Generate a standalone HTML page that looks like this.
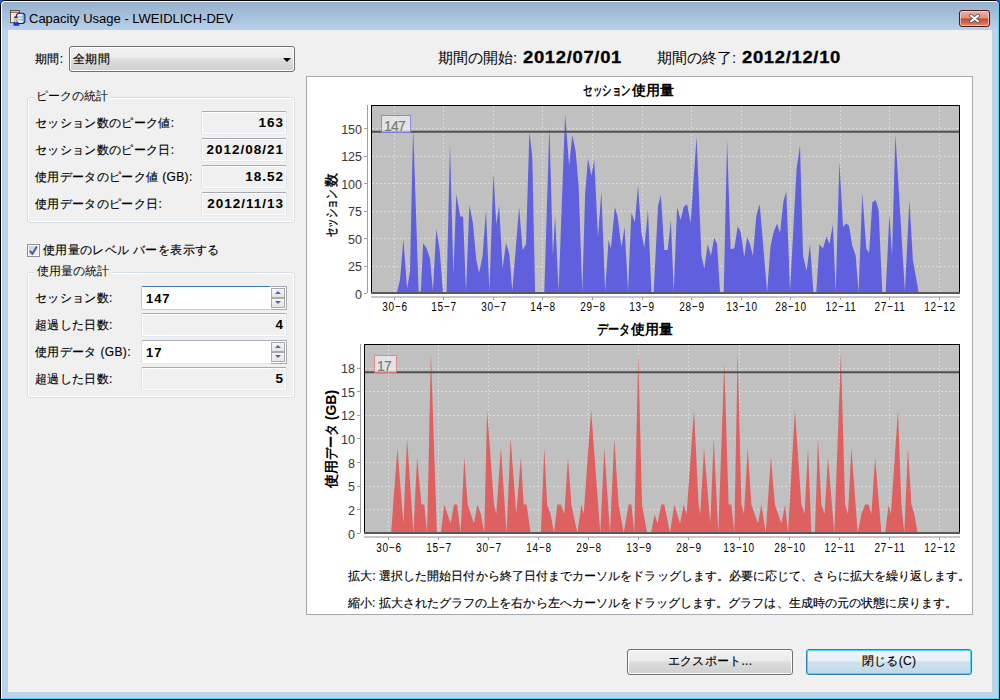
<!DOCTYPE html>
<html lang="ja"><head><meta charset="utf-8"><title>Capacity Usage</title>
<style>
*{margin:0;padding:0;box-sizing:border-box}
html,body{width:1000px;height:700px;overflow:hidden;background:#1d5fc0}
body{position:relative;font-family:"Liberation Sans",sans-serif;font-size:12px;color:#000}
.a{position:absolute;white-space:nowrap}
#win{position:absolute;left:0;top:0;width:1000px;height:700px;border-radius:5px 5px 0 0;overflow:hidden;background:#bcd3ea;border:1px solid #000}
#tb{position:absolute;left:0;top:0;width:998px;height:29px;background:linear-gradient(#95aecb,#b9d1ea)}
#hl{position:absolute;left:0;top:0;width:998px;height:698px;border-top:1px solid #fff;border-left:1px solid #fff;border-right:1px solid #3fdcf4;border-bottom:1px solid #3fdcf4;border-radius:4px 4px 0 0}
#client{position:absolute;left:8px;top:30px;width:984px;height:662px;background:#f0f0f0}
.lbl{position:absolute;white-space:nowrap;font-size:12px;line-height:14px;letter-spacing:0.35px;-webkit-text-stroke:0.15px #000}
.grp{position:absolute;border:1px solid #d5dfe5;border-radius:3px;box-shadow:inset 0 0 0 1px #fff}
.leg{position:absolute;background:#f0f0f0;padding:0 2px;font-size:12px;line-height:14px;white-space:nowrap}
.fld{position:absolute;border:1px solid #dde2e8;border-top-color:#a8abb2;border-bottom-color:#e3e9ef;border-radius:2px;background:#f0f0f0;box-shadow:inset 0 0 0 1px #fdfdfd}
.val{position:absolute;right:2px;top:4px;font-weight:bold;font-size:13.5px;line-height:14px;letter-spacing:1px}
.nk{display:inline-block;white-space:nowrap;overflow:visible}
.nk>span{display:inline-block;transform-origin:0 50%}
.spin{position:absolute;border:1px solid #dbdfe6;border-top-color:#abadb3;border-bottom-color:#e3e9ef;border-radius:2px;background:#fff}
.sb{position:absolute;right:0;width:16px;height:11px;border:1px solid #b0b0b0;background:linear-gradient(#f4f4f4,#e0e0e0)}
.sb i{position:absolute;left:4px;width:0;height:0;border-left:3.5px solid transparent;border-right:3.5px solid transparent}
.ytl{position:absolute;text-align:right;font-size:12.5px;line-height:14px;color:#383838}
.xtl{position:absolute;text-align:center;font-family:"Liberation Sans",sans-serif;font-size:12.5px;line-height:14px;color:#000;letter-spacing:0.9px;transform:scaleX(0.8)}
.btn{position:absolute;border:1px solid #707070;border-radius:3px;background:linear-gradient(#f2f2f2 0%,#ebebeb 45%,#dddddd 50%,#cfcfcf 100%);box-shadow:inset 0 0 0 1px #fcfcfc;text-align:center;font-size:12px;line-height:23px;letter-spacing:0.3px;-webkit-text-stroke:0.15px #000}
</style></head><body>
<div id="win">
 <div id="tb"></div>
 <div id="hl"></div>
</div>
<!-- title icon -->
<svg class="a" style="left:8px;top:8px" width="20" height="20" viewBox="0 0 20 20">
 <defs><linearGradient id="dbg" x1="0" y1="0" x2="1" y2="0"><stop offset="0" stop-color="#ffffff"/><stop offset="0.6" stop-color="#d8e8ec"/><stop offset="1" stop-color="#5a9aa0"/></linearGradient></defs>
 <rect x="2.5" y="2.5" width="9" height="12.2" fill="#dfe0c4" stroke="#56564c" stroke-width="1"/>
 <rect x="3" y="3" width="8" height="1.1" fill="#ecc848"/>
 <rect x="3" y="4.1" width="8" height="0.7" fill="#9a3050"/>
 <g fill="#ffffff"><rect x="3.3" y="5.3" width="1.2" height="1.2"/><rect x="5.3" y="5.3" width="1.2" height="1.2"/><rect x="7.3" y="5.3" width="1.2" height="1.2"/><rect x="3.3" y="7.3" width="1.2" height="1.2"/><rect x="5.3" y="7.3" width="1.2" height="1.2"/><rect x="3.3" y="9.3" width="1.2" height="1.2"/><rect x="3.3" y="11.3" width="1.2" height="1.2"/><rect x="3.3" y="13" width="1.2" height="1"/></g>
 <path d="M10.6 5.3 L15.2 5.3 L16.9 6.8 L16.9 14 L15.2 15.5 L10.6 15.5 L8.6 14 L8.6 6.8 Z" fill="url(#dbg)" stroke="#121a8c" stroke-width="1.1"/>
 <path d="M9.2 9 H16.4 M9.2 11.8 H16.4" stroke="#6aa0b0" stroke-width="0.8"/>
 <path d="M5.6 17.8 Q4.8 13.2 7.8 12.9 Q10.8 13.2 11.6 17.8 Z" fill="#2232d0"/>
 <rect x="7.2" y="13" width="1.4" height="1.3" fill="#e8f0ff"/>
 <ellipse cx="7.9" cy="11" rx="1.8" ry="2" fill="#f0b078"/>
 <path d="M6 10 Q6.2 7.9 7.9 7.9 Q9.7 7.9 9.9 10 Z" fill="#2a3aa8"/>
</svg>
<div class="a" style="left:29px;top:11px;font-size:13px;line-height:16px;color:#000">Capacity Usage - LWEIDLICH-DEV</div>
<!-- close button -->
<div class="a" style="left:959px;top:10px;width:31px;height:17px;border:1px solid #4a1a22;border-radius:3px;background:linear-gradient(#ebb0a0 0%,#e0907c 48%,#c04a30 52%,#d86a50 80%,#e89070 100%);box-shadow:inset 0 0 0 1px rgba(255,220,210,0.7)"></div>
<svg class="a" style="left:968px;top:13px" width="14" height="11" viewBox="0 0 14 11">
 <path d="M3 2.6 L10 8.4 M10 2.6 L3 8.4" stroke="#3a3a4a" stroke-width="3.6" stroke-linecap="round"/>
 <path d="M3 2.6 L10 8.4 M10 2.6 L3 8.4" stroke="#ffffff" stroke-width="2.2" stroke-linecap="round"/>
</svg>
<div id="client"></div>

<!-- left panel -->
<div class="lbl" style="left:35px;top:52px">期間:</div>
<div class="a" style="left:69px;top:46px;width:226px;height:26px;border:1px solid #707070;border-radius:3px;background:linear-gradient(#f2f2f2 0%,#ebebeb 45%,#dddddd 50%,#cfcfcf 100%);box-shadow:inset 0 0 0 1px #fcfcfc"></div>
<div class="lbl" style="left:73px;top:52px">全期間</div>
<div class="a" style="left:283px;top:58px;width:0;height:0;border-left:4px solid transparent;border-right:4px solid transparent;border-top:4px solid #000"></div>

<div class="grp" style="left:27px;top:97px;width:268px;height:126px"></div>
<div class="leg" style="left:34px;top:89px">ピークの統計</div>
<div class="lbl" style="left:35px;top:116px">セッション数のピーク値:</div>
<div class="lbl" style="left:35px;top:143px">セッション数のピーク日:</div>
<div class="lbl" style="left:35px;top:170px">使用データのピーク値 (GB):</div>
<div class="lbl" style="left:35px;top:197px">使用データのピーク日:</div>
<div class="fld" style="left:201px;top:111px;width:86px;height:24px"><div class="val">163</div></div>
<div class="fld" style="left:201px;top:138px;width:86px;height:24px"><div class="val">2012/08/21</div></div>
<div class="fld" style="left:201px;top:165px;width:86px;height:24px"><div class="val">18.52</div></div>
<div class="fld" style="left:201px;top:192px;width:86px;height:24px"><div class="val">2012/11/13</div></div>

<div class="a" style="left:27px;top:244px;width:13px;height:13px;border:1px solid #8f8f8f;background:#fff"></div>
<div class="a" style="left:29px;top:246px;width:9px;height:9px;background:linear-gradient(135deg,#c8ccd4,#eef0f2)"></div>
<svg class="a" style="left:28px;top:245px" width="11" height="11" viewBox="0 0 11 11"><path d="M2 5.8 L4.4 8.8 L8.8 1.6" stroke="#4a5a9c" stroke-width="1.9" fill="none"/></svg>
<div class="lbl" style="left:43px;top:243px">使用量のレベル バーを表示する</div>

<div class="grp" style="left:27px;top:272px;width:268px;height:126px"></div>
<div class="leg" style="left:35px;top:264px">使用量の統計</div>
<div class="lbl" style="left:35px;top:291px">セッション数:</div>
<div class="lbl" style="left:35px;top:318px">超過した日数:</div>
<div class="lbl" style="left:35px;top:345px">使用データ (GB):</div>
<div class="lbl" style="left:35px;top:372px">超過した日数:</div>
<div class="spin" style="left:141px;top:286px;width:146px;height:24px;border-color:#3d7bad #b5cfe7 #b5cfe7 #b5cfe7;">
 <div class="a" style="left:4px;top:5px;font-weight:bold;font-size:13px;line-height:13px;letter-spacing:0.9px">147</div>
</div>
<div class="a" style="left:270px;top:286px;width:17px;height:24px;border:1px solid #a9a9b0;border-left-color:#fff;background:#fff"></div>
<div class="a" style="left:271px;top:288px;width:14px;height:10px;border:1px solid #a9a9b0;background:linear-gradient(#f6f6f6,#e4e4e4)"></div>
<div class="a" style="left:271px;top:298px;width:14px;height:10px;border:1px solid #a9a9b0;background:linear-gradient(#f6f6f6,#e4e4e4)"></div>
<div class="a" style="left:275px;top:291px;width:0;height:0;border-left:3px solid transparent;border-right:3px solid transparent;border-bottom:3px solid #4a5fc0"></div>
<div class="a" style="left:275px;top:301px;width:0;height:0;border-left:3px solid transparent;border-right:3px solid transparent;border-top:3px solid #4a5fc0"></div>
<div class="fld" style="left:141px;top:313px;width:146px;height:24px"><div class="val">4</div></div>
<div class="spin" style="left:141px;top:340px;width:146px;height:24px;">
 <div class="a" style="left:4px;top:5px;font-weight:bold;font-size:13px;line-height:13px;letter-spacing:0.9px">17</div>
</div>
<div class="a" style="left:270px;top:340px;width:17px;height:24px;border:1px solid #a9a9b0;border-left-color:#fff;background:#fff"></div>
<div class="a" style="left:271px;top:342px;width:14px;height:10px;border:1px solid #a9a9b0;background:linear-gradient(#f6f6f6,#e4e4e4)"></div>
<div class="a" style="left:271px;top:352px;width:14px;height:10px;border:1px solid #a9a9b0;background:linear-gradient(#f6f6f6,#e4e4e4)"></div>
<div class="a" style="left:275px;top:345px;width:0;height:0;border-left:3px solid transparent;border-right:3px solid transparent;border-bottom:3px solid #4a5fc0"></div>
<div class="a" style="left:275px;top:355px;width:0;height:0;border-left:3px solid transparent;border-right:3px solid transparent;border-top:3px solid #4a5fc0"></div>
<div class="fld" style="left:141px;top:367px;width:146px;height:24px"><div class="val">5</div></div>

<!-- right header -->
<div class="a" style="left:438px;top:49px;font-size:15px;line-height:18px">期間の開始: <b style="display:inline-block;margin-left:2px;transform:scaleX(1.15);transform-origin:0 50%;font-size:16px;letter-spacing:0.6px;-webkit-text-stroke:0.3px #000">2012/07/01</b></div>
<div class="a" style="left:657px;top:49px;font-size:15px;line-height:18px">期間の終了: <b style="display:inline-block;margin-left:2px;transform:scaleX(1.15);transform-origin:0 50%;font-size:16px;letter-spacing:0.6px;-webkit-text-stroke:0.3px #000">2012/12/10</b></div>

<!-- chart panel -->
<div class="a" style="left:306px;top:76px;width:667px;height:539px;background:#fff;border:1px solid #a8a8b0"></div>
<div class="a" style="left:583px;top:82px;font-weight:bold;font-size:14px;line-height:16px"><span class="nk" style="width:49px"><span style="transform:scaleX(0.68)">セッション</span></span>使用量</div>
<div class="a" style="left:597px;top:321px;font-weight:bold;font-size:14px;line-height:16px"><span class="nk" style="width:34px"><span style="transform:scaleX(0.8)">データ</span></span>使用量</div>
<div class="a" style="left:331px;top:204.5px;transform:translate(-50%,-50%) rotate(-90deg);font-size:14px;line-height:14px;-webkit-text-stroke:0.4px #000"><span class="nk" style="width:50px"><span style="transform:scaleX(0.67)">セッション</span></span>数</div>
<div class="a" style="left:331px;top:439px;transform:translate(-50%,-50%) rotate(-90deg);font-weight:bold;font-size:14px;line-height:16px">使用<span class="nk" style="width:36px"><span style="transform:scaleX(0.86)">データ</span></span> (GB)</div>
<svg class="a" style="left:0;top:0" width="1000" height="700" viewBox="0 0 1000 700">
<rect x="371" y="105" width="588" height="187.5" fill="#c0c0c0"/>
<line x1="372" y1="266.5" x2="959" y2="266.5" stroke="#dadada" stroke-width="1" stroke-dasharray="2,2"/>
<line x1="372" y1="238.5" x2="959" y2="238.5" stroke="#dadada" stroke-width="1" stroke-dasharray="2,2"/>
<line x1="372" y1="211.5" x2="959" y2="211.5" stroke="#dadada" stroke-width="1" stroke-dasharray="2,2"/>
<line x1="372" y1="183.5" x2="959" y2="183.5" stroke="#dadada" stroke-width="1" stroke-dasharray="2,2"/>
<line x1="372" y1="156.5" x2="959" y2="156.5" stroke="#dadada" stroke-width="1" stroke-dasharray="2,2"/>
<line x1="372" y1="128.5" x2="959" y2="128.5" stroke="#dadada" stroke-width="1" stroke-dasharray="2,2"/>
<line x1="394.5" y1="106" x2="394.5" y2="292.5" stroke="#dadada" stroke-width="1" stroke-dasharray="2,2"/>
<line x1="443.5" y1="106" x2="443.5" y2="292.5" stroke="#dadada" stroke-width="1" stroke-dasharray="2,2"/>
<line x1="493.5" y1="106" x2="493.5" y2="292.5" stroke="#dadada" stroke-width="1" stroke-dasharray="2,2"/>
<line x1="542.5" y1="106" x2="542.5" y2="292.5" stroke="#dadada" stroke-width="1" stroke-dasharray="2,2"/>
<line x1="592.5" y1="106" x2="592.5" y2="292.5" stroke="#dadada" stroke-width="1" stroke-dasharray="2,2"/>
<line x1="642.5" y1="106" x2="642.5" y2="292.5" stroke="#dadada" stroke-width="1" stroke-dasharray="2,2"/>
<line x1="691.5" y1="106" x2="691.5" y2="292.5" stroke="#dadada" stroke-width="1" stroke-dasharray="2,2"/>
<line x1="741.5" y1="106" x2="741.5" y2="292.5" stroke="#dadada" stroke-width="1" stroke-dasharray="2,2"/>
<line x1="790.5" y1="106" x2="790.5" y2="292.5" stroke="#dadada" stroke-width="1" stroke-dasharray="2,2"/>
<line x1="840.5" y1="106" x2="840.5" y2="292.5" stroke="#dadada" stroke-width="1" stroke-dasharray="2,2"/>
<line x1="889.5" y1="106" x2="889.5" y2="292.5" stroke="#dadada" stroke-width="1" stroke-dasharray="2,2"/>
<line x1="939.5" y1="106" x2="939.5" y2="292.5" stroke="#dadada" stroke-width="1" stroke-dasharray="2,2"/>
<polygon points="397.1,292.5 397.1,292.0 400.0,280.0 403.4,239.1 407.1,288.6 410.0,271.4 413.1,127.1 418.6,291.4 420.9,291.4 423.1,242.9 426.6,248.6 430.0,258.6 432.9,290.9 436.3,229.1 439.7,250.0 442.9,292.0 446.6,292.0 450.0,144.3 453.4,274.3 456.3,194.3 460.3,216.6 463.1,216.6 466.0,292.0 469.4,205.1 472.9,222.9 476.3,260.0 479.1,272.9 482.6,255.7 486.0,210.0 489.4,292.0 493.4,172.9 496.3,224.3 499.1,205.7 502.6,268.6 506.0,242.9 509.4,254.3 512.3,290.9 519.1,207.1 522.6,250.0 526.0,244.3 529.4,131.4 532.3,157.1 535.1,292.0 544.3,292.0 549.4,125.7 552.9,255.7 555.1,215.7 558.6,291.4 565.1,114.3 569.1,165.7 572.3,134.9 575.7,151.4 578.6,185.7 582.3,292.0 585.1,194.3 588.0,158.6 591.4,175.7 594.3,160.0 598.0,237.1 601.4,191.4 605.1,290.9 608.6,240.0 610.9,248.6 614.9,207.1 617.7,217.1 621.4,247.1 624.6,227.1 628.0,290.9 631.4,212.9 634.9,222.3 638.0,185.7 641.4,232.9 644.3,248.0 648.0,210.0 651.4,292.0 653.7,292.0 658.0,205.7 660.9,195.1 664.3,250.0 667.7,250.0 670.9,220.0 673.7,292.0 677.1,207.1 680.6,220.0 683.7,207.1 687.1,204.3 690.6,222.9 696.6,137.1 701.4,255.7 704.3,268.6 707.7,244.3 710.9,255.7 714.3,237.7 717.1,244.3 720.0,292.0 723.7,292.0 727.1,140.0 730.6,249.1 734.3,248.6 737.7,226.6 740.6,231.4 744.3,257.1 747.1,237.1 750.0,244.3 752.9,255.7 756.3,215.7 759.7,204.3 767.1,292.0 770.6,245.7 773.4,232.9 777.1,223.4 780.0,232.9 783.4,201.4 786.3,191.4 790.0,290.9 796.6,168.6 800.0,145.7 803.1,255.7 806.6,270.9 810.0,244.3 813.4,292.0 816.3,292.0 819.4,244.3 822.9,248.6 826.6,236.6 829.4,244.3 832.9,224.3 835.7,292.0 839.4,161.4 843.1,227.1 846.0,223.4 849.1,225.7 852.3,245.7 855.7,255.7 858.6,292.0 862.3,192.9 866.3,248.6 869.1,252.9 872.3,202.3 875.7,200.0 878.6,210.0 882.3,292.0 885.7,292.0 889.4,214.3 892.0,255.7 895.4,134.3 904.9,290.9 909.4,200.0 912.9,260.0 918.6,292.0 918.6,292.5" fill="#6060de"/>
<line x1="371" y1="131.8" x2="959" y2="131.8" stroke="#505050" stroke-width="2"/>
<rect x="371" y="105" width="589" height="1" fill="#000"/>
<rect x="371" y="105" width="1" height="187" fill="#000"/>
<rect x="959" y="105" width="1" height="187" fill="#000"/>
<rect x="371" y="292" width="589" height="2" fill="#5a5a5a"/>
<rect x="367" y="105" width="1" height="188" fill="#a0a0a0"/>
<rect x="364" y="293" width="3" height="1" fill="#a0a0a0"/>
<rect x="364" y="266" width="3" height="1" fill="#a0a0a0"/>
<rect x="364" y="238" width="3" height="1" fill="#a0a0a0"/>
<rect x="364" y="211" width="3" height="1" fill="#a0a0a0"/>
<rect x="364" y="183" width="3" height="1" fill="#a0a0a0"/>
<rect x="364" y="156" width="3" height="1" fill="#a0a0a0"/>
<rect x="364" y="128" width="3" height="1" fill="#a0a0a0"/>
<rect x="371" y="296" width="589" height="2" fill="#c8c8c8"/>
<rect x="394" y="297" width="1" height="3" fill="#a0a0a0"/>
<rect x="443" y="297" width="1" height="3" fill="#a0a0a0"/>
<rect x="493" y="297" width="1" height="3" fill="#a0a0a0"/>
<rect x="542" y="297" width="1" height="3" fill="#a0a0a0"/>
<rect x="592" y="297" width="1" height="3" fill="#a0a0a0"/>
<rect x="642" y="297" width="1" height="3" fill="#a0a0a0"/>
<rect x="691" y="297" width="1" height="3" fill="#a0a0a0"/>
<rect x="741" y="297" width="1" height="3" fill="#a0a0a0"/>
<rect x="790" y="297" width="1" height="3" fill="#a0a0a0"/>
<rect x="840" y="297" width="1" height="3" fill="#a0a0a0"/>
<rect x="889" y="297" width="1" height="3" fill="#a0a0a0"/>
<rect x="939" y="297" width="1" height="3" fill="#a0a0a0"/>
<rect x="364" y="344" width="595" height="188.5" fill="#c0c0c0"/>
<line x1="365" y1="509.5" x2="959" y2="509.5" stroke="#dadada" stroke-width="1" stroke-dasharray="2,2"/>
<line x1="365" y1="486.5" x2="959" y2="486.5" stroke="#dadada" stroke-width="1" stroke-dasharray="2,2"/>
<line x1="365" y1="462.5" x2="959" y2="462.5" stroke="#dadada" stroke-width="1" stroke-dasharray="2,2"/>
<line x1="365" y1="438.5" x2="959" y2="438.5" stroke="#dadada" stroke-width="1" stroke-dasharray="2,2"/>
<line x1="365" y1="415.5" x2="959" y2="415.5" stroke="#dadada" stroke-width="1" stroke-dasharray="2,2"/>
<line x1="365" y1="391.5" x2="959" y2="391.5" stroke="#dadada" stroke-width="1" stroke-dasharray="2,2"/>
<line x1="365" y1="368.5" x2="959" y2="368.5" stroke="#dadada" stroke-width="1" stroke-dasharray="2,2"/>
<line x1="388.5" y1="345" x2="388.5" y2="532.5" stroke="#dadada" stroke-width="1" stroke-dasharray="2,2"/>
<line x1="438.5" y1="345" x2="438.5" y2="532.5" stroke="#dadada" stroke-width="1" stroke-dasharray="2,2"/>
<line x1="488.5" y1="345" x2="488.5" y2="532.5" stroke="#dadada" stroke-width="1" stroke-dasharray="2,2"/>
<line x1="538.5" y1="345" x2="538.5" y2="532.5" stroke="#dadada" stroke-width="1" stroke-dasharray="2,2"/>
<line x1="588.5" y1="345" x2="588.5" y2="532.5" stroke="#dadada" stroke-width="1" stroke-dasharray="2,2"/>
<line x1="638.5" y1="345" x2="638.5" y2="532.5" stroke="#dadada" stroke-width="1" stroke-dasharray="2,2"/>
<line x1="688.5" y1="345" x2="688.5" y2="532.5" stroke="#dadada" stroke-width="1" stroke-dasharray="2,2"/>
<line x1="739.5" y1="345" x2="739.5" y2="532.5" stroke="#dadada" stroke-width="1" stroke-dasharray="2,2"/>
<line x1="789.5" y1="345" x2="789.5" y2="532.5" stroke="#dadada" stroke-width="1" stroke-dasharray="2,2"/>
<line x1="839.5" y1="345" x2="839.5" y2="532.5" stroke="#dadada" stroke-width="1" stroke-dasharray="2,2"/>
<line x1="889.5" y1="345" x2="889.5" y2="532.5" stroke="#dadada" stroke-width="1" stroke-dasharray="2,2"/>
<line x1="939.5" y1="345" x2="939.5" y2="532.5" stroke="#dadada" stroke-width="1" stroke-dasharray="2,2"/>
<polygon points="391.1,532.5 391.1,533.0 397.4,447.9 403.4,523.5 407.1,438.4 413.4,533.0 417.1,457.3 421.4,504.6 424.3,504.6 427.1,533.0 430.9,353.3 436.9,533.0 440.9,533.0 444.3,504.6 450.6,523.5 454.0,504.6 457.1,504.6 460.6,533.0 464.3,457.3 467.7,504.6 474.0,523.5 477.4,504.6 480.9,514.1 484.3,533.0 487.1,410.1 494.0,504.6 496.3,514.1 500.9,447.9 506.6,533.0 510.6,438.4 516.3,514.1 520.9,457.3 523.7,504.6 526.6,504.6 530.6,533.0 540.9,533.0 544.3,447.9 547.1,504.6 550.6,514.1 554.0,533.0 557.4,504.6 560.9,504.6 564.3,514.1 568.0,457.3 571.4,504.6 577.4,533.0 581.4,504.6 583.7,514.1 591.1,410.1 600.3,533.0 604.3,447.9 610.0,533.0 614.3,438.4 618.6,504.6 623.7,533.0 628.6,504.6 631.4,504.6 634.3,533.0 638.3,353.3 642.0,504.6 647.1,533.0 651.1,533.0 654.6,514.1 657.4,523.5 661.4,504.6 664.3,504.6 670.0,533.0 674.3,504.6 680.0,523.5 683.7,504.6 686.6,514.1 694.0,410.1 698.6,504.6 700.3,514.1 704.0,447.9 710.3,523.5 713.7,438.4 718.3,533.0 724.3,362.8 728.6,504.6 731.4,504.6 734.3,533.0 737.7,353.3 741.4,504.6 744.0,514.1 747.7,447.9 751.4,504.6 758.0,523.5 761.4,504.6 765.7,533.0 770.9,457.3 774.9,504.6 781.4,523.5 785.1,504.6 788.0,533.0 794.9,410.1 801.4,504.6 804.6,514.1 808.0,447.9 811.4,533.0 814.9,533.0 818.0,438.4 821.4,504.6 824.6,514.1 828.0,457.3 834.3,533.0 840.9,353.3 845.1,504.6 848.0,514.1 851.4,447.9 857.7,533.0 861.4,514.1 865.1,504.6 868.6,504.6 871.4,514.1 875.1,457.3 881.4,533.0 885.1,533.0 888.6,504.6 890.9,514.1 898.0,410.1 901.4,504.6 904.3,533.0 908.0,447.9 911.4,504.6 914.3,514.1 917.7,533.0 917.7,532.5" fill="#de6060"/>
<line x1="364" y1="372.2" x2="959" y2="372.2" stroke="#505050" stroke-width="2"/>
<rect x="364" y="344" width="596" height="1" fill="#000"/>
<rect x="364" y="344" width="1" height="188" fill="#000"/>
<rect x="959" y="344" width="1" height="188" fill="#000"/>
<rect x="364" y="532" width="596" height="2" fill="#5a5a5a"/>
<rect x="360" y="344" width="1" height="189" fill="#a0a0a0"/>
<rect x="357" y="533" width="3" height="1" fill="#a0a0a0"/>
<rect x="357" y="509" width="3" height="1" fill="#a0a0a0"/>
<rect x="357" y="486" width="3" height="1" fill="#a0a0a0"/>
<rect x="357" y="462" width="3" height="1" fill="#a0a0a0"/>
<rect x="357" y="438" width="3" height="1" fill="#a0a0a0"/>
<rect x="357" y="415" width="3" height="1" fill="#a0a0a0"/>
<rect x="357" y="391" width="3" height="1" fill="#a0a0a0"/>
<rect x="357" y="368" width="3" height="1" fill="#a0a0a0"/>
<rect x="364" y="536" width="596" height="2" fill="#c8c8c8"/>
<rect x="388" y="537" width="1" height="3" fill="#a0a0a0"/>
<rect x="438" y="537" width="1" height="3" fill="#a0a0a0"/>
<rect x="488" y="537" width="1" height="3" fill="#a0a0a0"/>
<rect x="538" y="537" width="1" height="3" fill="#a0a0a0"/>
<rect x="588" y="537" width="1" height="3" fill="#a0a0a0"/>
<rect x="638" y="537" width="1" height="3" fill="#a0a0a0"/>
<rect x="688" y="537" width="1" height="3" fill="#a0a0a0"/>
<rect x="739" y="537" width="1" height="3" fill="#a0a0a0"/>
<rect x="789" y="537" width="1" height="3" fill="#a0a0a0"/>
<rect x="839" y="537" width="1" height="3" fill="#a0a0a0"/>
<rect x="889" y="537" width="1" height="3" fill="#a0a0a0"/>
<rect x="939" y="537" width="1" height="3" fill="#a0a0a0"/>
</svg>
<div class="a" style="left:381px;top:115px;width:30px;height:18px;border:1px solid rgba(90,90,230,0.65);border-radius:1px;background:rgba(255,255,255,0.55)"></div>
<div class="a" style="left:384px;top:119px;font-size:14px;line-height:15px;letter-spacing:-0.8px;color:#7a7a7a;-webkit-text-stroke:0.2px #7a7a7a">147</div>
<div class="a" style="left:374px;top:355px;width:23px;height:18px;border:1px solid rgba(230,90,90,0.65);border-radius:1px;background:rgba(255,255,255,0.55)"></div>
<div class="a" style="left:377px;top:359px;font-size:14px;line-height:15px;letter-spacing:-0.8px;color:#7a7a7a;-webkit-text-stroke:0.2px #7a7a7a">17</div>
<div class="ytl" style="left:308px;top:287.5px;width:54px">0</div>
<div class="ytl" style="left:308px;top:260.1px;width:54px">25</div>
<div class="ytl" style="left:308px;top:232.7px;width:54px">50</div>
<div class="ytl" style="left:308px;top:205.2px;width:54px">75</div>
<div class="ytl" style="left:308px;top:177.8px;width:54px">100</div>
<div class="ytl" style="left:308px;top:150.4px;width:54px">125</div>
<div class="ytl" style="left:308px;top:123.0px;width:54px">150</div>
<div class="ytl" style="left:301px;top:527.5px;width:54px">0</div>
<div class="ytl" style="left:301px;top:503.9px;width:54px">2</div>
<div class="ytl" style="left:301px;top:480.2px;width:54px">5</div>
<div class="ytl" style="left:301px;top:456.6px;width:54px">8</div>
<div class="ytl" style="left:301px;top:432.9px;width:54px">10</div>
<div class="ytl" style="left:301px;top:409.3px;width:54px">12</div>
<div class="ytl" style="left:301px;top:385.6px;width:54px">15</div>
<div class="ytl" style="left:301px;top:362.0px;width:54px">18</div>
<div class="xtl" style="left:364.8px;top:300px;width:60px">30&#8722;6</div>
<div class="xtl" style="left:414.3px;top:300px;width:60px">15&#8722;7</div>
<div class="xtl" style="left:463.9px;top:300px;width:60px">30&#8722;7</div>
<div class="xtl" style="left:513.4px;top:300px;width:60px">14&#8722;8</div>
<div class="xtl" style="left:562.9px;top:300px;width:60px">29&#8722;8</div>
<div class="xtl" style="left:612.4px;top:300px;width:60px">13&#8722;9</div>
<div class="xtl" style="left:662.0px;top:300px;width:60px">28&#8722;9</div>
<div class="xtl" style="left:711.5px;top:300px;width:60px">13&#8722;10</div>
<div class="xtl" style="left:761.0px;top:300px;width:60px">28&#8722;10</div>
<div class="xtl" style="left:810.6px;top:300px;width:60px">12&#8722;11</div>
<div class="xtl" style="left:860.1px;top:300px;width:60px">27&#8722;11</div>
<div class="xtl" style="left:909.6px;top:300px;width:60px">12&#8722;12</div>
<div class="xtl" style="left:358.7px;top:540.5px;width:60px">30&#8722;6</div>
<div class="xtl" style="left:408.8px;top:540.5px;width:60px">15&#8722;7</div>
<div class="xtl" style="left:458.9px;top:540.5px;width:60px">30&#8722;7</div>
<div class="xtl" style="left:509.0px;top:540.5px;width:60px">14&#8722;8</div>
<div class="xtl" style="left:559.1px;top:540.5px;width:60px">29&#8722;8</div>
<div class="xtl" style="left:609.2px;top:540.5px;width:60px">13&#8722;9</div>
<div class="xtl" style="left:659.3px;top:540.5px;width:60px">28&#8722;9</div>
<div class="xtl" style="left:709.4px;top:540.5px;width:60px">13&#8722;10</div>
<div class="xtl" style="left:759.5px;top:540.5px;width:60px">28&#8722;10</div>
<div class="xtl" style="left:809.6px;top:540.5px;width:60px">12&#8722;11</div>
<div class="xtl" style="left:859.7px;top:540.5px;width:60px">27&#8722;11</div>
<div class="xtl" style="left:909.8px;top:540.5px;width:60px">12&#8722;12</div>
<div class="lbl" style="left:348px;top:569px;letter-spacing:0.07px">拡大: 選択した開始日付から終了日付までカーソルをドラッグします。必要に応じて、さらに拡大を繰り返します。</div>
<div class="lbl" style="left:348px;top:596px;letter-spacing:0.05px">縮小: 拡大されたグラフの上を右から左へカーソルをドラッグします。グラフは、生成時の元の状態に戻ります。</div>

<!-- buttons -->
<div class="btn" style="left:627px;top:649px;width:166px;height:26px">エクスポート...</div>
<div class="btn" style="left:806px;top:649px;width:166px;height:26px;border-color:#2a80b9;background:linear-gradient(#f0f5fa 0%,#e8f0f6 45%,#cfe2ed 50%,#bfd8e6 100%);box-shadow:inset 0 0 0 1px #4cd6f7">閉じる(C)</div>
</body></html>
